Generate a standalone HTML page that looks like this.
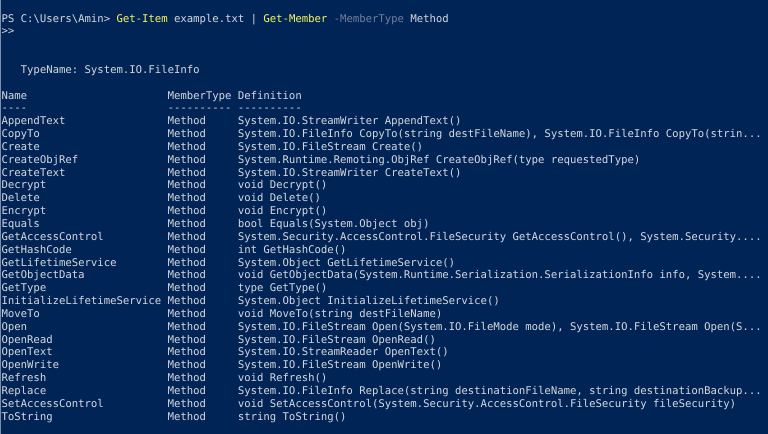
<!DOCTYPE html>
<html><head><meta charset="utf-8">
<style>
html,body{margin:0;padding:0;background:#012456;width:768px;height:434px;overflow:hidden}
#edge{position:absolute;left:0;top:0;width:1px;height:434px;background:#7f8ea6}
pre{position:absolute;left:1.5px;top:12.5px;margin:0;font-family:"DejaVu Sans Mono",monospace;font-size:10.62px;line-height:12.85px;color:#d2d6dc;white-space:pre;filter:blur(0.3px);text-rendering:geometricPrecision}
.y{color:#f2f25a}.g{color:#6f7f98}
</style></head><body>
<div id="edge"></div>
<pre>PS C:\Users\Amin&gt; <span class="y">Get-Item</span> example.txt | <span class="y">Get-Member</span> <span class="g">-MemberType</span> Method
&gt;&gt;


   TypeName: System.IO.FileInfo

Name                      MemberType Definition
----                      ---------- ----------
AppendText                Method     System.IO.StreamWriter AppendText()
CopyTo                    Method     System.IO.FileInfo CopyTo(string destFileName), System.IO.FileInfo CopyTo(strin...
Create                    Method     System.IO.FileStream Create()
CreateObjRef              Method     System.Runtime.Remoting.ObjRef CreateObjRef(type requestedType)
CreateText                Method     System.IO.StreamWriter CreateText()
Decrypt                   Method     void Decrypt()
Delete                    Method     void Delete()
Encrypt                   Method     void Encrypt()
Equals                    Method     bool Equals(System.Object obj)
GetAccessControl          Method     System.Security.AccessControl.FileSecurity GetAccessControl(), System.Security....
GetHashCode               Method     int GetHashCode()
GetLifetimeService        Method     System.Object GetLifetimeService()
GetObjectData             Method     void GetObjectData(System.Runtime.Serialization.SerializationInfo info, System....
GetType                   Method     type GetType()
InitializeLifetimeService Method     System.Object InitializeLifetimeService()
MoveTo                    Method     void MoveTo(string destFileName)
Open                      Method     System.IO.FileStream Open(System.IO.FileMode mode), System.IO.FileStream Open(S...
OpenRead                  Method     System.IO.FileStream OpenRead()
OpenText                  Method     System.IO.StreamReader OpenText()
OpenWrite                 Method     System.IO.FileStream OpenWrite()
Refresh                   Method     void Refresh()
Replace                   Method     System.IO.FileInfo Replace(string destinationFileName, string destinationBackup...
SetAccessControl          Method     void SetAccessControl(System.Security.AccessControl.FileSecurity fileSecurity)
ToString                  Method     string ToString()</pre>
</body></html>
